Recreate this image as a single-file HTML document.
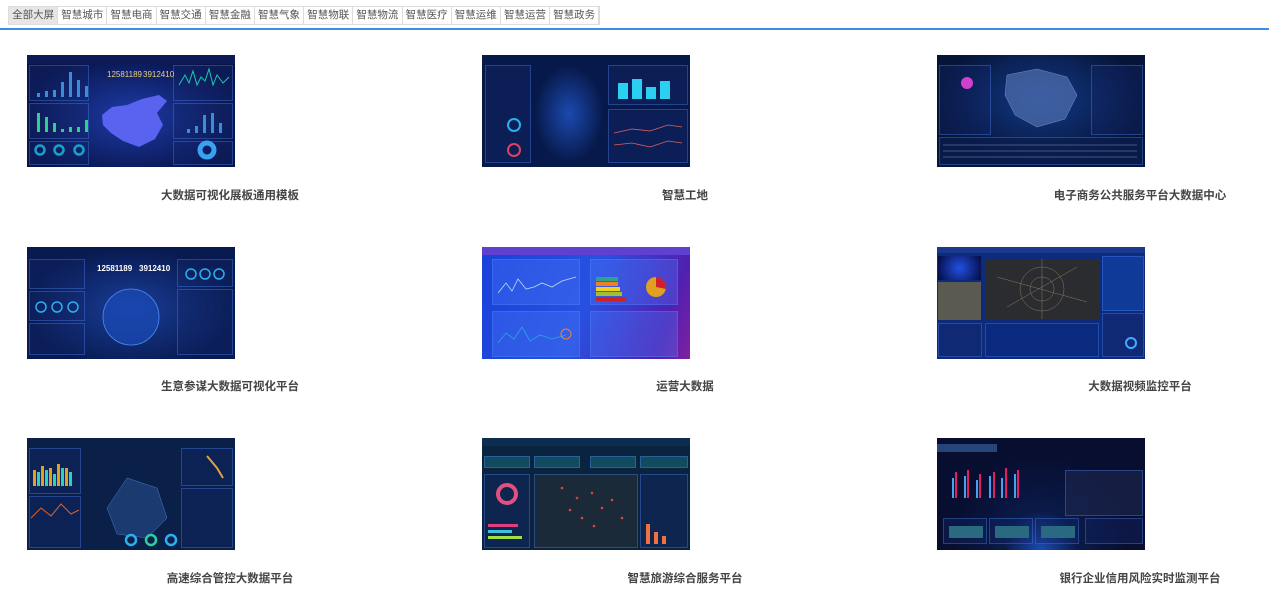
<!DOCTYPE html>
<html><head><meta charset="utf-8"><style>
*{margin:0;padding:0;box-sizing:border-box}
body{width:1269px;height:593px;background:#fff;font-family:"Liberation Sans","Noto Sans CJK SC",sans-serif;position:relative;overflow:hidden}
.tabs{position:absolute;left:8px;top:6px;height:19px;display:flex;border:1px solid #ddd;background:#fff}
.tabs span{display:block;width:49.2px;height:17px;line-height:17px;text-align:center;font-size:10.5px;color:#555;border-right:1px solid #ddd}
.tabs span:first-child{background:#e6e6e6}
.line{position:absolute;left:0;top:28px;width:1269px;height:2px;background:#3a8ee6}
.th{position:absolute;width:208px;height:112px;overflow:hidden}
.t{position:absolute;width:300px;text-align:center;font-size:11.5px;font-weight:bold;color:#444}
.p{position:absolute;border:1px solid rgba(80,140,255,.35);background:rgba(20,40,110,.35)}
</style></head><body>
<div class="tabs"><span>全部大屏</span><span>智慧城市</span><span>智慧电商</span><span>智慧交通</span><span>智慧金融</span><span>智慧气象</span><span>智慧物联</span><span>智慧物流</span><span>智慧医疗</span><span>智慧运维</span><span>智慧运营</span><span>智慧政务</span></div>
<div class="line"></div>

<!-- 1 -->
<div class="th" style="left:27px;top:55px;background:radial-gradient(ellipse at 50% 55%,#1c3ca8,#0a1650 70%,#081040)">
<div style="position:absolute;left:0;top:0;width:208px;height:9px;background:#0c1a55"></div>
<div class="p" style="left:2px;top:10px;width:60px;height:36px"></div>
<div class="p" style="left:2px;top:48px;width:60px;height:36px"></div>
<div class="p" style="left:2px;top:86px;width:60px;height:24px"></div>
<div class="p" style="left:146px;top:10px;width:60px;height:36px"></div>
<div class="p" style="left:146px;top:48px;width:60px;height:36px"></div>
<div class="p" style="left:146px;top:86px;width:60px;height:24px"></div>
<svg style="position:absolute;left:0;top:0" width="208" height="112">
<g fill="#3a8ed8"><rect x="10" y="38" width="3" height="4"/><rect x="18" y="36" width="3" height="6"/><rect x="26" y="35" width="3" height="7"/><rect x="34" y="27" width="3" height="15"/><rect x="42" y="17" width="3" height="25"/><rect x="50" y="25" width="3" height="17"/><rect x="58" y="31" width="3" height="11"/></g>
<g fill="#2ed08a"><rect x="10" y="58" width="3" height="19"/><rect x="18" y="62" width="3" height="15"/><rect x="26" y="68" width="3" height="9"/><rect x="34" y="74" width="3" height="3"/><rect x="42" y="72" width="3" height="5"/><rect x="50" y="72" width="3" height="5"/><rect x="58" y="65" width="3" height="12"/></g>
<g fill="none" stroke="#1aa0c8" stroke-width="2.5"><circle cx="13" cy="95" r="4.5"/><circle cx="32" cy="95" r="4.5"/><circle cx="52" cy="95" r="4.5"/></g>
<path d="M152 30 L158 20 L162 28 L166 16 L170 30 L174 22 L178 26 L182 14 L186 30 L190 20 L196 28 L202 22" stroke="#1ec8b0" fill="none"/>
<g fill="#3a8ed8"><rect x="160" y="74" width="3" height="4"/><rect x="168" y="71" width="3" height="7"/><rect x="176" y="60" width="3" height="18"/><rect x="184" y="58" width="3" height="20"/><rect x="192" y="68" width="3" height="10"/></g>
<circle cx="180" cy="95" r="7" fill="none" stroke="#3aa0f0" stroke-width="5"/>
<path d="M75 60 L85 52 L100 50 L115 44 L132 40 L140 46 L130 58 L136 70 L128 84 L112 92 L96 86 L84 78 L76 70 Z" fill="#5a62f0"/>
<text x="80" y="22" fill="#e8d080" font-size="8">12581189</text><text x="116" y="22" fill="#e8d080" font-size="8">3912410</text>
</svg></div>
<div class="t" style="left:80px;top:187px">大数据可视化展板通用模板</div>

<!-- 2 -->
<div class="th" style="left:482px;top:55px;background:#07194a">
<div class="p" style="left:3px;top:10px;width:46px;height:98px"></div>
<div style="position:absolute;left:52px;top:10px;width:70px;height:98px;background:radial-gradient(ellipse,#1c4ab0,#07194a 70%)"></div>
<div class="p" style="left:126px;top:10px;width:80px;height:40px"></div>
<div class="p" style="left:126px;top:54px;width:80px;height:54px"></div>
<svg style="position:absolute;left:0;top:0" width="208" height="112">
<g fill="#2ad0f0"><rect x="136" y="28" width="10" height="16"/><rect x="150" y="24" width="10" height="20"/><rect x="164" y="32" width="10" height="12"/><rect x="178" y="26" width="10" height="18"/></g>
<circle cx="32" cy="70" r="6" fill="none" stroke="#2ab0f0" stroke-width="2"/><circle cx="32" cy="95" r="6" fill="none" stroke="#e04060" stroke-width="2"/>
<path d="M132 78 L150 74 L168 76 L186 70 L200 72 M132 90 L150 88 L168 92 L186 86 L200 88" stroke="#e06060" fill="none" stroke-width=".8"/>
</svg></div>
<div class="t" style="left:535px;top:187px">智慧工地</div>

<!-- 3 -->
<div class="th" style="left:937px;top:55px;background:radial-gradient(ellipse at 50% 40%,#123a88,#061438 70%)">
<div class="p" style="left:2px;top:10px;width:52px;height:70px"></div>
<div class="p" style="left:154px;top:10px;width:52px;height:70px"></div>
<div class="p" style="left:2px;top:82px;width:204px;height:28px;background:rgba(10,30,80,.7)"></div>
<svg style="position:absolute;left:0;top:0" width="208" height="112">
<path d="M70 20 L100 14 L130 22 L140 40 L128 64 L100 72 L78 60 L68 40 Z" fill="#5a7ab8" opacity=".6" stroke="#c0d0ff" stroke-width=".5"/>
<circle cx="30" cy="28" r="6" fill="#d040d0"/>
<g stroke="#8090c0" stroke-width=".6"><line x1="6" y1="90" x2="200" y2="90"/><line x1="6" y1="96" x2="200" y2="96"/><line x1="6" y1="102" x2="200" y2="102"/></g>
</svg></div>
<div class="t" style="left:990px;top:187px">电子商务公共服务平台大数据中心</div>

<!-- 4 -->
<div class="th" style="left:27px;top:247px;background:radial-gradient(ellipse at 50% 55%,#1a3e9a,#081a50 70%)">
<div class="p" style="left:2px;top:12px;width:56px;height:30px"></div>
<div class="p" style="left:2px;top:44px;width:56px;height:30px"></div>
<div class="p" style="left:2px;top:76px;width:56px;height:32px"></div>
<div class="p" style="left:150px;top:12px;width:56px;height:28px"></div>
<div class="p" style="left:150px;top:42px;width:56px;height:66px"></div>
<svg style="position:absolute;left:0;top:0" width="208" height="112">
<text x="70" y="24" fill="#fff" font-size="8" font-weight="bold">12581189</text><text x="112" y="24" fill="#fff" font-size="8" font-weight="bold">3912410</text>
<circle cx="104" cy="70" r="28" fill="#1a4ab8" opacity=".7"/><circle cx="104" cy="70" r="28" fill="none" stroke="#4a90f0" stroke-width=".8"/>
<g fill="none" stroke="#2ab0f0" stroke-width="1.5"><circle cx="14" cy="60" r="5"/><circle cx="30" cy="60" r="5"/><circle cx="46" cy="60" r="5"/><circle cx="164" cy="27" r="5"/><circle cx="178" cy="27" r="5"/><circle cx="192" cy="27" r="5"/></g>
</svg></div>
<div class="t" style="left:80px;top:378px">生意参谋大数据可视化平台</div>

<!-- 5 -->
<div class="th" style="left:482px;top:247px;background:linear-gradient(110deg,#1a40d8,#2850e0 50%,#5020b0 85%,#8020a0)">
<div style="position:absolute;left:0;top:0;width:208px;height:8px;background:#6040d0"></div>
<div class="p" style="left:10px;top:12px;width:88px;height:46px;background:rgba(80,130,255,.3)"></div>
<div class="p" style="left:108px;top:12px;width:88px;height:46px;background:rgba(80,130,255,.3)"></div>
<div class="p" style="left:10px;top:64px;width:88px;height:46px;background:rgba(80,130,255,.3)"></div>
<div class="p" style="left:108px;top:64px;width:88px;height:46px;background:rgba(80,130,255,.3)"></div>
<svg style="position:absolute;left:0;top:0" width="208" height="112">
<path d="M16 46 L24 36 L30 44 L36 32 L44 42 L52 40 L60 36 L70 40 L80 34 L94 30" stroke="#bde" fill="none" stroke-width=".8"/>
<g><rect x="114" y="30" width="22" height="4" fill="#30a090"/><rect x="114" y="35" width="22" height="4" fill="#f08020"/><rect x="114" y="40" width="24" height="4" fill="#f0d020"/><rect x="114" y="45" width="26" height="4" fill="#a0c030"/><rect x="114" y="50" width="30" height="4" fill="#d02020"/></g>
<circle cx="174" cy="40" r="10" fill="#e0a020"/><path d="M174 40 L174 30 A10 10 0 0 1 184 42 Z" fill="#d02030"/>
<path d="M16 96 L24 86 L32 92 L40 80 L48 94 L58 88 L70 92 L84 88" stroke="#2ad" fill="none" stroke-width=".8"/>
<circle cx="84" cy="87" r="5" fill="none" stroke="#f08040"/>
</svg></div>
<div class="t" style="left:535px;top:378px">运营大数据</div>

<!-- 6 -->
<div class="th" style="left:937px;top:247px;background:#0e2a7a">
<div style="position:absolute;left:0;top:0;width:208px;height:6px;background:#1a3a90"></div>
<div style="position:absolute;left:1px;top:9px;width:43px;height:24px;background:radial-gradient(circle,#2050e0,#050a40)"></div>
<div style="position:absolute;left:1px;top:35px;width:43px;height:38px;background:#5a5a50"></div>
<div style="position:absolute;left:48px;top:12px;width:114px;height:60px;background:#2a2c30"></div>
<div class="p" style="left:48px;top:76px;width:114px;height:34px;background:#0a2a80"></div>
<div class="p" style="left:165px;top:9px;width:42px;height:55px;background:#103a98"></div>
<div class="p" style="left:165px;top:66px;width:42px;height:44px"></div>
<div class="p" style="left:1px;top:76px;width:44px;height:34px"></div>
<svg style="position:absolute;left:0;top:0" width="208" height="112">
<g stroke="#8a7a60" stroke-width=".5" fill="none"><circle cx="105" cy="42" r="12"/><circle cx="105" cy="42" r="22"/><path d="M60 30 L150 55 M70 60 L140 20 M105 12 L105 72"/></g>
<circle cx="194" cy="96" r="5" fill="none" stroke="#4af" stroke-width="2"/>
</svg></div>
<div class="t" style="left:990px;top:378px">大数据视频监控平台</div>

<!-- 7 -->
<div class="th" style="left:27px;top:438px;background:#0a2048">
<div class="p" style="left:2px;top:10px;width:52px;height:46px"></div>
<div class="p" style="left:2px;top:58px;width:52px;height:52px"></div>
<div class="p" style="left:154px;top:10px;width:52px;height:38px"></div>
<div class="p" style="left:154px;top:50px;width:52px;height:60px"></div>
<svg style="position:absolute;left:0;top:0" width="208" height="112">
<g fill="#e0a020"><rect x="6" y="32" width="3" height="16"/><rect x="14" y="28" width="3" height="20"/><rect x="22" y="30" width="3" height="18"/><rect x="30" y="26" width="3" height="22"/><rect x="38" y="30" width="3" height="18"/></g>
<g fill="#2ad0c0"><rect x="10" y="34" width="3" height="14"/><rect x="18" y="32" width="3" height="16"/><rect x="26" y="36" width="3" height="12"/><rect x="34" y="30" width="3" height="18"/><rect x="42" y="34" width="3" height="14"/></g>
<path d="M4 80 L14 70 L24 78 L34 66 L44 76 L52 72" stroke="#e06030" fill="none"/>
<path d="M100 40 L130 50 L140 80 L120 100 L90 96 L80 70 Z" fill="#1a3a70" stroke="#4a7ac0" stroke-width=".5"/>
<g fill="none" stroke-width="2.5"><circle cx="104" cy="102" r="5" stroke="#2ab0f0"/><circle cx="124" cy="102" r="5" stroke="#2ad0a0"/><circle cx="144" cy="102" r="5" stroke="#2ab0f0"/></g>
<path d="M180 18 L190 30 L196 40" stroke="#e0a040" fill="none" stroke-width="2"/>
</svg></div>
<div class="t" style="left:80px;top:570px">高速综合管控大数据平台</div>

<!-- 8 -->
<div class="th" style="left:482px;top:438px;background:#0a2440">
<div style="position:absolute;left:0;top:0;width:208px;height:8px;background:#0c2c50"></div>
<div class="p" style="left:2px;top:18px;width:46px;height:12px;background:#124a60"></div>
<div class="p" style="left:52px;top:18px;width:46px;height:12px;background:#124a60"></div>
<div class="p" style="left:108px;top:18px;width:46px;height:12px;background:#124a60"></div>
<div class="p" style="left:158px;top:18px;width:48px;height:12px;background:#124a60"></div>
<div class="p" style="left:2px;top:36px;width:46px;height:74px"></div>
<div class="p" style="left:52px;top:36px;width:104px;height:74px;background:#1a2a38"></div>
<div class="p" style="left:158px;top:36px;width:48px;height:74px"></div>
<svg style="position:absolute;left:0;top:0" width="208" height="112">
<circle cx="25" cy="56" r="9" fill="none" stroke="#e05080" stroke-width="4"/>
<g fill="#e04040"><circle cx="80" cy="50" r="1.3"/><circle cx="95" cy="60" r="1.3"/><circle cx="110" cy="55" r="1.3"/><circle cx="120" cy="70" r="1.3"/><circle cx="100" cy="80" r="1.3"/><circle cx="130" cy="62" r="1.3"/><circle cx="88" cy="72" r="1.3"/><circle cx="112" cy="88" r="1.3"/><circle cx="140" cy="80" r="1.3"/></g>
<g><rect x="6" y="86" width="30" height="3" fill="#e04080"/><rect x="6" y="92" width="24" height="3" fill="#40c0e0"/><rect x="6" y="98" width="34" height="3" fill="#a0e040"/></g>
<g fill="#f07040"><rect x="164" y="86" width="4" height="20"/><rect x="172" y="94" width="4" height="12"/><rect x="180" y="98" width="4" height="8"/></g>
</svg></div>
<div class="t" style="left:535px;top:570px">智慧旅游综合服务平台</div>

<!-- 9 -->
<div class="th" style="left:937px;top:438px;background:radial-gradient(ellipse at 50% 100%,#1a4ab0 0%,#0a1a48 25%,#080e30 60%)">
<div style="position:absolute;left:0;top:6px;width:60px;height:8px;background:#3a6ab0;opacity:.6"></div>
<div class="p" style="left:128px;top:32px;width:78px;height:46px;background:rgba(30,40,80,.6)"></div>
<div class="p" style="left:6px;top:80px;width:44px;height:26px"></div>
<div class="p" style="left:52px;top:80px;width:44px;height:26px"></div>
<div class="p" style="left:98px;top:80px;width:44px;height:26px"></div>
<div class="p" style="left:148px;top:80px;width:58px;height:26px"></div>
<svg style="position:absolute;left:0;top:0" width="208" height="112">
<g fill="#e02060"><rect x="18" y="34" width="2" height="26"/><rect x="30" y="32" width="2" height="28"/><rect x="42" y="36" width="2" height="24"/><rect x="56" y="34" width="2" height="26"/><rect x="68" y="30" width="2" height="30"/><rect x="80" y="32" width="2" height="28"/></g>
<g fill="#4aa0f0"><rect x="15" y="40" width="2" height="20"/><rect x="27" y="38" width="2" height="22"/><rect x="39" y="42" width="2" height="18"/><rect x="52" y="38" width="2" height="22"/><rect x="64" y="40" width="2" height="20"/><rect x="77" y="36" width="2" height="24"/></g>
<g fill="#2a6a80"><rect x="12" y="88" width="34" height="12"/><rect x="58" y="88" width="34" height="12"/><rect x="104" y="88" width="34" height="12"/></g>
</svg></div>
<div class="t" style="left:990px;top:570px">银行企业信用风险实时监测平台</div>
</body></html>
